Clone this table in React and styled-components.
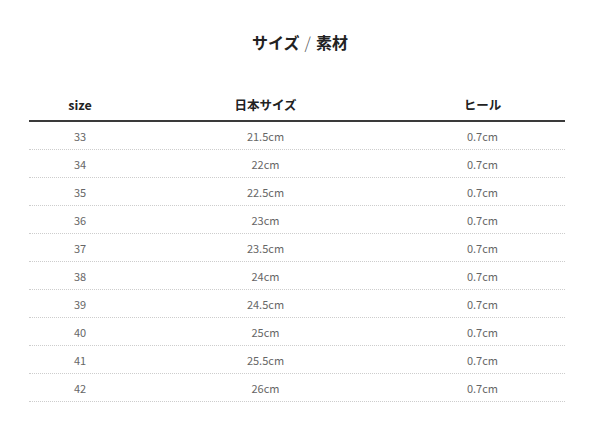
import styled, { createGlobalStyle } from 'styled-components';

const GlobalStyle = createGlobalStyle`
  body {
    margin: 0;
    background: #fff;
    font-family: "Noto Sans", "Noto Sans CJK JP", sans-serif;
  }
`;

const Page = styled.div`
  width: 600px;
  padding-top: 30px;
`;

const Title = styled.h2`
  margin: 0;
  text-align: center;
  font-size: 16px;
  line-height: 24px;
  font-weight: 700;
  color: #222;
  font-family: "Noto Sans CJK JP", sans-serif;
`;

const Slash = styled.span`
  font-weight: 300;
  color: #555;
  margin: 0 5px;
`;

const Table = styled.div`
  width: 536px;
  margin: 34px 0 0 29px;
`;

const Row = styled.div`
  display: grid;
  grid-template-columns: 102px 269px 165px;
  align-items: center;
  height: ${(p) => (p.$head ? '32px' : '27px')};
  border-bottom: ${(p) => (p.$head ? '2px solid #3a3a3a' : '1px dotted #cdcdcd')};
`;

const Cell = styled.div`
  text-align: center;
  font-size: ${(p) => (p.$head ? '12.5px' : '11px')};
  font-weight: ${(p) => (p.$head ? 700 : 400)};
  color: ${(p) => (p.$head ? '#222' : '#666')};
  font-family: "Noto Sans CJK JP", sans-serif;
`;

const rows = [
  ['33', '21.5cm'],
  ['34', '22cm'],
  ['35', '22.5cm'],
  ['36', '23cm'],
  ['37', '23.5cm'],
  ['38', '24cm'],
  ['39', '24.5cm'],
  ['40', '25cm'],
  ['41', '25.5cm'],
  ['42', '26cm'],
];

export default function App() {
  return (
    <Page>
      <GlobalStyle />
      <Title>
        サイズ<Slash>/</Slash>素材
      </Title>
      <Table>
        <Row $head>
          <Cell $head>size</Cell>
          <Cell $head>日本サイズ</Cell>
          <Cell $head>ヒール</Cell>
        </Row>
        {rows.map(([size, jp]) => (
          <Row key={size}>
            <Cell>{size}</Cell>
            <Cell>{jp}</Cell>
            <Cell>0.7cm</Cell>
          </Row>
        ))}
      </Table>
    </Page>
  );
}
